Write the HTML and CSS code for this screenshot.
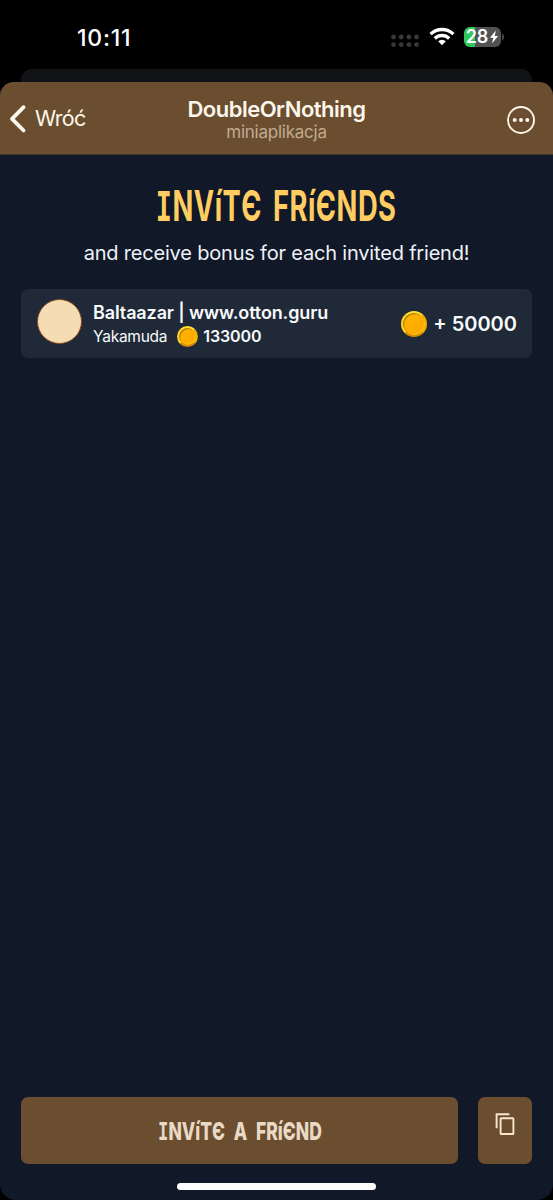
FILE: index.html
```html
<!DOCTYPE html>
<html lang="pl">
<head>
<meta charset="utf-8">
<title>DoubleOrNothing</title>
<link rel="stylesheet" href="styles.css">
</head>
<body>
<div class="phone">
  <div class="status">
    <span class="time">10:11</span>
    <div class="indicators">
      <svg class="dots" width="28" height="14" viewBox="0 0 28 14" fill="#38383b"><circle cx="2.5" cy="3" r="2.4"/><circle cx="10.2" cy="3" r="2.4"/><circle cx="17.9" cy="3" r="2.4"/><circle cx="25.5" cy="3" r="2.4"/><circle cx="2.5" cy="10.6" r="2.4"/><circle cx="10.2" cy="10.6" r="2.4"/><circle cx="17.9" cy="10.6" r="2.4"/><circle cx="25.5" cy="10.6" r="2.4"/></svg>
      <svg class="wifi" width="26" height="19" viewBox="0 0 26 19"><g fill="none" stroke="#fff" stroke-width="3.3"><path d="M1.6 7.2a16.2 16.2 0 0 1 22.8 0"/><path d="M5.8 11.5a10.2 10.2 0 0 1 14.4 0"/></g><path d="M13 18.2l-3.8-3.9a5.4 5.4 0 0 1 7.6 0z" fill="#fff"/></svg>
      <div class="battery"><span class="level">28</span><svg width="10" height="14" viewBox="0 0 9 14" fill="#fff"><path d="M6.4.6L.4 7.8h3.4L2.5 13.4 8.6 6H5.2z"/></svg></div>
      <span class="cap"></span>
    </div>
  </div>
  <div class="backsheet"></div>
  <div class="sheet">
    <header class="bar">
      <div class="back"><svg width="18" height="30" viewBox="0 0 18 30" fill="none" stroke="#fdf6ea" stroke-width="3.8" stroke-linecap="round" stroke-linejoin="round"><path d="M14.6 3.2L3 14.8l11.6 11.7"/></svg><span>Wróć</span></div>
      <div class="names"><div class="app">DoubleOrNothing</div><div class="kind">miniaplikacja</div></div>
      <svg class="more" width="28" height="28" viewBox="0 0 28 28"><circle cx="14" cy="14" r="13" fill="none" stroke="#fdf6ea" stroke-width="1.9"/><g fill="#fdf6ea"><circle cx="7.7" cy="14" r="2"/><circle cx="14" cy="14" r="2"/><circle cx="20.3" cy="14" r="2"/></g></svg>
    </header>
    <main class="content">
      <h1 class="title rune"><span class="serif">I</span>NVíTЄ FRíЄNDS</h1>
      <p class="lead">and receive bonus for each invited friend!</p>
      <section class="card">
        <div class="avatar"></div>
        <div class="who">
          <div class="nick">Baltaazar | www.otton.guru</div>
          <div class="stats"><span class="rank">Yakamuda</span><span class="coin small"></span><b class="score">133000</b></div>
        </div>
        <div class="bonus"><span class="coin"></span><span class="plus">+ 50000</span></div>
      </section>
    </main>
    <footer class="actions">
      <div class="invite"><span class="label rune"><span class="serif">I</span>NVíTЄ A FRíЄND</span></div>
      <div class="copy"><svg width="20" height="24" viewBox="0 0 20 24" fill="none" stroke="#f8e5cd" stroke-width="1.9"><path d="M1.6 16.2V2.2h12.8"/><rect x="5.6" y="6.2" width="12.8" height="15.8" rx=".6"/></svg></div>
    </footer>
    <div class="home"></div>
  </div>
</div>
</body>
</html>
```
FILE: styles.css
```css
* { box-sizing: border-box; }
body { margin: 0; background: #000; font-family: Inter, "Liberation Sans", sans-serif; }
.phone { width: 553px; height: 1200px; display: flex; flex-direction: column; overflow: hidden; background: #000; }
.status { height: 69px; flex: none; display: flex; justify-content: space-between; padding: 0 49px 0 77px; color: #fff; }
.time { font-size: 23px; line-height: 26px; margin-top: 25px; font-weight: 500; letter-spacing: .8px; }
.indicators { display: flex; align-items: flex-start; }
.dots { margin-top: 34px; }
.wifi { margin: 27px 9px 0 10px; }
.battery { width: 37px; height: 20px; margin-top: 27px; border-radius: 6px; background: linear-gradient(90deg, #30c85a 11px, #525254 11px); display: flex; align-items: center; justify-content: center; gap: 1px; }
.level { font-size: 18px; line-height: 20px; font-weight: 600; }
.cap { width: 2px; height: 6px; margin: 34px 0 0 1px; border-radius: 0 2px 2px 0; background: #444; }
.backsheet { height: 13px; flex: none; margin: 0 21px; border-radius: 11px 11px 0 0; background: #121316; }
.sheet { flex: 1; display: flex; flex-direction: column; background: #111827; border-radius: 14px 14px 16px 16px; overflow: hidden; }
.bar { height: 73px; flex: none; display: grid; grid-template-columns: 130px 1fr 130px; background: #6b4e30; border-bottom: 1px solid #3f3837; color: #fdf6ea; }
.back { display: flex; align-items: flex-start; padding: 22px 0 0 9px; font-size: 21.5px; line-height: 29px; }
.back span { margin-left: 8px; letter-spacing: -.7px; }
.names { text-align: center; padding-top: 14px; }
.app { font-size: 22px; line-height: 26px; font-weight: 600; white-space: nowrap; letter-spacing: -.5px; }
.kind { font-size: 17px; line-height: 20px; color: #c1ab91; letter-spacing: -.25px; }
.more { justify-self: end; margin: 24px 18px 0 0; }
.content { flex: 1; padding: 30px 21px 0 21px; display: flex; flex-direction: column; align-items: center; }
.rune { white-space: nowrap; font-family: Inter, sans-serif; }
.serif { font-family: "DejaVu Sans Mono", monospace; font-weight: 700; font-size: .98em; }
.title { margin: 0; height: 44px; line-height: 42px; font-size: 42px; font-weight: 700; color: #ffcd62; word-spacing: 6px; letter-spacing: .8px; transform: scaleX(.65); }
.lead { margin: 10px 0 0; font-size: 20px; line-height: 28px; color: #eef2f8; white-space: nowrap; letter-spacing: -.19px; }
.card { width: 511px; height: 69px; margin-top: 22px; border-radius: 7px; background: #1f2937; display: flex; align-items: flex-start; padding: 0 15px 0 16px; color: #f8fafc; }
.avatar { width: 45px; height: 45px; margin-top: 10px; border-radius: 50%; background: #f6dcb2; border: 1px solid #8a4b20; }
.who { flex: 1; margin: 13px 0 0 11px; white-space: nowrap; }
.nick { font-size: 18px; line-height: 22px; font-weight: 600; letter-spacing: -.12px; }
.stats { display: flex; align-items: center; height: 24px; }
.rank { font-size: 15.5px; letter-spacing: -.25px; }
.score { font-size: 16px; font-weight: 600; letter-spacing: -.1px; }
.coin { width: 26px; height: 26px; flex: none; border-radius: 50%; background: linear-gradient(135deg, #ffb800, #fba500); border: 2.5px solid; border-color: #ffe03a #f2b000 #d88a00 #ffd52c; box-shadow: inset 1px 1px 1px #a87500, inset -1px -1px 1px #ffc318; }
.coin.small { width: 21px; height: 21px; border-width: 2px; margin: 0 5px 0 10px; }
.bonus { display: flex; align-items: center; gap: 6px; height: 69px; font-size: 20px; font-weight: 600; white-space: nowrap; }
.actions { height: 67px; flex: none; display: flex; gap: 20px; margin: 0 21px; }
.invite, .copy { background: #6b4e30; border-radius: 7px; }
.invite { flex: 1; display: flex; align-items: center; justify-content: center; }
.label { font-size: 25px; line-height: 32px; font-weight: 800; color: #e9d9c5; word-spacing: 7px; transform: translateY(1px) scaleX(.7); }
.copy { width: 54px; display: flex; justify-content: center; padding-top: 15px; }
.home { width: 199px; height: 7px; flex: none; align-self: center; margin: 19px 0 10px; border-radius: 4px; background: #fff; }
```
